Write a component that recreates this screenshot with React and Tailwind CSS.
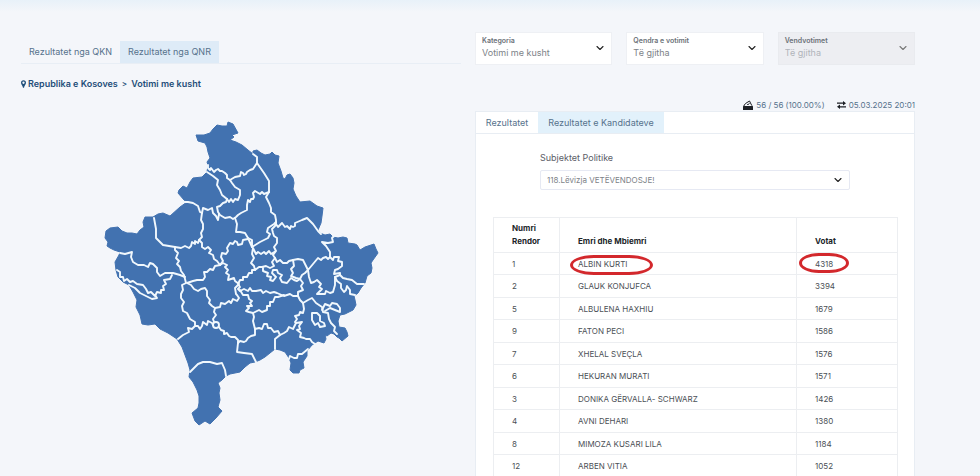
import React, { useState } from "react";

const candidates = [
  { nr: 1, name: "ALBIN KURTI", votes: 4318, marked: true },
  { nr: 2, name: "GLAUK KONJUFCA", votes: 3394 },
  { nr: 5, name: "ALBULENA HAXHIU", votes: 1679 },
  { nr: 9, name: "FATON PECI", votes: 1586 },
  { nr: 7, name: "XHELAL SVEÇLA", votes: 1576 },
  { nr: 6, name: "HEKURAN MURATI", votes: 1571 },
  { nr: 3, name: "DONIKA GËRVALLA- SCHWARZ", votes: 1426 },
  { nr: 4, name: "AVNI DEHARI", votes: 1380 },
  { nr: 8, name: "MIMOZA KUSARI LILA", votes: 1184 },
  { nr: 12, name: "ARBEN VITIA", votes: 1052 },
];

// country border
const outline =
  "M228 122L233 124L238 133L232 135L234 137L230 140L236 142L242 145L248 150L253 154L253 151L257 150L261 153L265 155L270 154L272 152L275 155L279 156L278 163L281 171L283 178L285 179L287 175L290 174L293 178L294 183L293 189L296 196L300 202L310 201L317 206L323 208L322 216L321 223L318 230L320 233L325 235L330 234L333 237L338 238L343 237L347 238L348 243L355 244L357 245L360 250L365 247L374 244L376 249L378 253L373 260L371 263L372 268L371 273L367 276L365 283L361 288L358 293L354 296L355 300L356 305L353 310L349 312L345 314L340 315L338 321L339 327L345 328L347 332L348 336L342 341L339 338L337 337L334 334L331 333L327 336L325 335L326 339L324 343L318 341L312 345L307 351L307 356L303 362L304 368L300 370L299 373L293 373L290 370L291 363L289 358L285 352L280 350L275 349L270 353L265 357L260 360L255 362L250 363L245 367L240 372L230 374L226 376L222 380L218 383L220 388L219 393L220 400L218 407L222 411L216 418L210 424L205 421L199 425L195 421L192 413L198 408L199 403L199 396L197 390L193 382L189 377L190 370L188 363L185 355L182 347L177 339L168 333L160 329L155 324L148 325L142 324L140 315L136 307L137 300L133 292L129 285L123 282L118 277L116 270L115 262L119 255L120 252L114 250L110 248L107 246L108 242L105 238L106 231L110 228L118 227L122 231L127 233L132 233L137 234L140 230L144 227L143 222L145 217L153 217L158 214L163 213L170 216L180 207L187 202L184 200L178 193L179 190L183 186L187 188L190 182L193 178L202 177L207 172L208 165L207 162L210 158L208 152L207 147L205 143L198 141L196 135L204 135L210 133L213 129L217 125L222 126L227 126Z";

// municipality borders
const borders = [
  "M208 165L208 168L210 170L211 168L214 172L216 170L218 169L220 171L222 171L225 173L227 175L227 178L230 180L235 177L240 176L241 172L243 173L244 175L246 174L247 172L250 170L253 169L255 166L257 163L257 157L253 154",
  "M257 163L264 173L269 181L269 192L266 197L269 203L271 208L271 212L275 215L276 220L276 224L278 227L282 223L285 227L287 226L290 229L291 226L293 227L295 226L295 223L302 220L307 218L313 224L318 231L321 234",
  "M207 172L213 176L218 180L217 185L220 190L222 195L227 199L229 202L231 199L233 202L235 199L238 200L240 195L240 190L235 187L232 183L230 180",
  "M227 199L226 202L223 203L220 206L217 207L218 212L220 215L225 218L230 217L233 219L236 217L238 215L241 213L247 210L247 205L248 200L250 202L251 199L253 199L254 197L253 193L255 191L260 194L262 192L264 194L269 192",
  "M182 202L188 202L193 203L198 206L200 212L202 213L203 208L208 210L212 208L213 213L216 216L218 220L219 214",
  "M202 213L201 220L203 224L203 229L201 233L202 237L199 240L198 243L195 241L195 244L192 242L191 246L189 248L185 246L181 248L175 247L169 246L163 245L159 241L156 238L156 229L154 218",
  "M175 247L175 250L178 253L176 258L179 261L177 264L180 267L181 271L184 275L186 283L182 285L183 290L181 294L181 298L184 302L182 306L183 311L187 313L190 319L195 322L195 325",
  "M120 253L125 254L132 252L131 257L133 262L138 265L144 265L148 267L150 263L153 264L157 268L157 272L160 276L165 273L173 273L180 275L185 277",
  "M172 275L170 279L164 280L166 284L163 286L164 290L161 290L161 293L157 292L155 296L151 292L148 293L146 289L143 285L137 284L133 281L130 282L127 279L124 281L123 277L120 277L120 272L117 270",
  "M129 285L135 288L140 293L146 296L152 299L157 298L155 295",
  "M199 240L202 243L202 247L205 249L208 247L211 250L209 253L213 255L214 259L217 261L220 265L215 266L213 270L210 269L207 272L204 272L205 277L203 280L197 280L193 281L187 283L191 285L194 289L198 291L201 289L205 288L207 291L207 296L210 300L209 303L212 306L215 308L214 312L216 315L213 319L214 322",
  "M215 308L220 307L221 303L225 304L229 301L231 303L233 299L237 301L239 298L237 295L236 294L235 288L239 284L235 281L234 278L228 280L229 275L226 273L228 270L225 267L227 265L223 263L220 265",
  "M220 265L223 261L221 257L222 253L226 254L228 251L227 248L230 243L233 244L235 241L237 242L238 245L242 244L243 240L248 239",
  "M235 218L237 224L236 232L240 232L245 233L248 238L252 247L260 242L268 238L270 234L267 232L268 228L274 224L276 222",
  "M276 222L275 226L272 229L273 233L274 236L277 238L277 243L274 247L276 251L271 254L269 251L266 254L264 252L261 254L258 252L256 254L253 248L252 254L254 258L251 263L254 266L255 270L259 267L262 267L266 266L270 268L274 266L272 262L275 258L273 255L276 251",
  "M252 247L252 240L248 238",
  "M275 258L277 262L280 260L283 263L287 263L289 261L293 260L298 259L303 260L308 270L313 264L318 258L321 260L323 258L326 257L328 259L330 257L330 252L326 246L322 242L328 243L333 242L332 238L334 236",
  "M293 260L294 266L291 269L293 273L291 276L296 278L300 279L302 275L305 273L308 270",
  "M255 270L252 270L252 273L249 273L247 277L243 277L243 280L240 280L238 284L240 287L238 289L240 291L244 289L248 291L250 288L252 291L256 291L261 290L263 293L266 291L270 293L274 292L277 293L284 296L290 294L293 296L298 296L298 292L303 290L301 286L303 283L300 279L297 281L294 280L291 278L287 283L282 282L280 278L282 275L278 273L277 270L273 270L272 273L276 277L273 281L270 280L271 277L267 276L268 273L263 271L263 268",
  "M298 296L300 300L303 303L304 309L303 313L300 312L299 315L295 316L297 319L295 322L296 323L293 329L289 327L287 331L284 333L280 335L278 331L274 332L271 328L268 328L267 324L264 324L262 329L259 328L255 329L253 321L254 317L253 313L249 312L246 311L249 308L247 306L252 306L250 303L252 301L249 299L248 295L243 295L240 290",
  "M253 313L259 310L262 312L267 310L267 306L270 306L270 302L273 302L275 297L278 297L284 295",
  "M255 329L255 335L251 336L248 338L246 341L244 342L240 341L238 343",
  "M178 339L183 335L189 332L188 328L192 329L195 326L198 326L200 329L202 326L203 322L207 325L208 321L212 323L213 325M219 327L221 330L224 331L224 334L227 333L229 336L231 337L235 337L238 340L238 343L237 352L244 353L252 354L256 362",
  "M190 372L193 369L198 364L203 362L210 362L217 364L222 363L225 370L226 376",
  "M275 349L275 339L280 335",
  "M296 323L302 322L299 326L300 329L297 330L301 333L300 337L304 338L306 339L310 339L312 342L315 344",
  "M289 359L290 356L294 358L297 358L298 354L302 354L308 349",
  "M303 303L308 300L312 298L316 303L322 307L323 312L328 313L329 319L331 323L335 327L334 331L337 334",
  "M308 270L309 277L311 283L314 282L317 280L321 284L319 287L322 289L317 294L325 294L326 291L330 293L333 292L335 285L335 277L340 275L343 278L347 279L352 280L357 284L364 284",
  "M330 257L333 260L334 257L339 257L338 261L342 262L342 266L338 269L335 270L334 274L340 273L340 275M335 277L337 281L341 284L341 288L344 292L346 290L347 286L350 290L350 294L355 295",
  "M322 310L325 304L330 306L332 303L337 304L340 308L340 312L335 310L330 308L325 311",
  "M312 313L317 313L320 316L320 321L324 323L325 326L320 327L318 323L315 325L312 320Z",
  "M213 325a3 3 0 1 0 6 0a3 3 0 1 0 -6 0",
];

function KosovoMap() {
  return (
    <svg
      viewBox="100 118 284 312"
      className="block w-[284px] h-[312px]"
      role="img"
      aria-label="Republika e Kosoves"
    >
      <path d={outline} fill="#4272b0" stroke="#4272b0" strokeLinejoin="round" />
      <g
        fill="none"
        stroke="#f1f8fd"
        strokeWidth="1.9"
        strokeLinejoin="round"
        strokeLinecap="round"
      >
        {borders.map((d) => (
          <path key={d} d={d} />
        ))}
      </g>
    </svg>
  );
}

function Chevron({ className }) {
  return (
    <svg
      className={`absolute w-2 h-2 pointer-events-none ${className}`}
      viewBox="0 0 8 8"
      fill="none"
      stroke="currentColor"
      strokeWidth="1.1"
      strokeLinecap="round"
      strokeLinejoin="round"
      aria-hidden="true"
    >
      <path d="M1 2.5L4 5.5L7 2.5" />
    </svg>
  );
}

function Filter({ id, label, value, disabled }) {
  return (
    <div
      className={`relative flex-1 h-[33px] border ${
        disabled ? "bg-[#edeef2] border-[#e9ebef]" : "bg-white border-[#eef0f4]"
      }`}
    >
      <label
        htmlFor={id}
        className="absolute left-[6px] top-[3px] text-[7px] leading-[10px] font-semibold text-[#6b7178] pointer-events-none"
      >
        {label}
      </label>
      <select
        id={id}
        disabled={disabled}
        className={`w-full h-full pl-[6px] pt-2 appearance-none text-[9px] leading-[12px] bg-transparent opacity-100 ${
          disabled ? "text-[#b0b4ba]" : "text-[#7d8288]"
        }`}
      >
        <option>{value}</option>
      </select>
      <Chevron
        className={`right-[7px] top-[11px] ${
          disabled ? "text-[#777]" : "text-[#222]"
        }`}
      />
    </div>
  );
}

export default function App() {
  const [source, setSource] = useState("QNR");
  const [tab, setTab] = useState("kandidatet");

  return (
    <div className="h-screen overflow-hidden bg-[#f4f6fa] font-['Inter',sans-serif] text-[9px] leading-[12px] text-[#56728c]">
      <div className="h-3 bg-linear-to-b from-[#e8f1f9] to-[#f4f6fa]" />
      <div className="grid grid-cols-2 gap-[14px] pl-[21px] pr-[65px] pt-5">
        <section className="pt-[9px]">
          <div className="flex border-b border-[#e8eef5]">
            {["QKN", "QNR"].map((name) => (
              <button
                key={name}
                type="button"
                onClick={() => setSource(name)}
                className={`w-[99px] h-[22px] ${
                  source === name ? "bg-[#deebf7]" : ""
                }`}
              >
                Rezultatet nga {name}
              </button>
            ))}
          </div>
          <nav className="flex items-center mt-[14px] font-semibold text-[#1f4e79]">
            <svg viewBox="0 0 6 9" className="w-[5px] h-2 mr-[2px]" aria-hidden="true">
              <path
                fillRule="evenodd"
                fill="currentColor"
                d="M3 0a3 3 0 0 1 3 3C6 5 4 6 3.6 9H2.4C2 6 0 5 0 3a3 3 0 0 1 3-3zM3 1.6a1.4 1.4 0 1 0 0 2.8a1.4 1.4 0 1 0 0-2.8z"
              />
            </svg>
            <a href="#kosova">Republika e Kosoves</a>
            <span className="mx-1 text-[8px] font-medium">&gt;</span>
            <a href="#kusht">Votimi me kusht</a>
          </nav>
          <div className="pl-[79px] mt-7">
            <KosovoMap />
          </div>
        </section>

        <section>
          <div className="flex gap-[14px]">
            <Filter id="kategoria" label="Kategoria" value="Votimi me kusht" />
            <Filter id="qendra" label="Qendra e votimit" value="Të gjitha" />
            <Filter id="vendvotimet" label="Vendvotimet" value="Të gjitha" disabled />
          </div>

          <div className="flex justify-end items-center gap-3 mt-[34px] text-[8px]">
            <span className="flex items-center gap-[3px]">
              <svg viewBox="0 0 10 10" className="w-[10px] h-[10px] text-[#1c1f24]" aria-hidden="true">
                <path fill="none" stroke="currentColor" d="M1 5.5L2.5 3.5L6.5 1L8.5 5" />
                <path fill="none" stroke="currentColor" strokeWidth=".8" d="M4 4L5 5L6.5 3" />
                <path fill="currentColor" d="M1.5 4.5L0 6.5V10H10V6.5L8.5 4.5V6H1.5z" />
              </svg>
              56 / 56 (100.00%)
            </span>
            <span className="flex items-center gap-[3px]">
              <svg viewBox="0 0 9 8" className="w-[9px] h-2 text-[#1c1f24]" aria-hidden="true">
                <path fill="none" stroke="currentColor" strokeWidth="1.3" d="M0 2.2H7M2 5.8H9" />
                <path fill="currentColor" d="M6 0L9 2.2L6 4.4zM3 3.6L0 5.8L3 8z" />
              </svg>
              05.03.2025 20:01
            </span>
          </div>

          <div className="bg-white border border-[#e8edf3]">
            <div className="flex border-b border-[#e8edf3]">
              <button
                type="button"
                onClick={() => setTab("rezultatet")}
                className={`h-[21px] w-[62px] ${
                  tab === "rezultatet" ? "bg-[#e2f1fb]" : ""
                }`}
              >
                Rezultatet
              </button>
              <button
                type="button"
                onClick={() => setTab("kandidatet")}
                className={`h-[21px] w-[126px] ${
                  tab === "kandidatet" ? "bg-[#e2f1fb]" : ""
                }`}
              >
                Rezultatet e Kandidateve
              </button>
            </div>

            <div className="mx-16 pt-[18px]">
              <label htmlFor="subjekti" className="block text-[#5b6067]">
                Subjektet Politike
              </label>
              <div className="relative mt-[6px]">
                <select
                  id="subjekti"
                  className="block w-full h-[20px] pl-[6px] appearance-none border border-[#e6e9f3] rounded-xs bg-white text-[8px] text-[#7d8288]"
                >
                  <option>118.Lëvizja VETËVENDOSJE!</option>
                </select>
                <Chevron className="right-2 top-[6px] text-[#222]" />
              </div>
            </div>

            <div className="ml-[17px] mr-4 mt-[27px]">
              <table className="w-full table-fixed border-collapse text-left text-[8px] text-[#4b5056]">
                <colgroup>
                  <col className="w-[66px]" />
                  <col />
                  <col className="w-[101px]" />
                </colgroup>
                <thead>
                  <tr className="h-[35px] align-bottom text-[#212529] leading-[13px]">
                    <th className="border border-[#eceef1] pl-[18px] pb-1">
                      Numri Rendor
                    </th>
                    <th className="border border-[#eceef1] pl-[18px] pb-1">
                      Emri dhe Mbiemri
                    </th>
                    <th className="border border-[#eceef1] pl-[18px] pb-1">
                      Votat
                    </th>
                  </tr>
                </thead>
                <tbody>
                  {candidates.map((c) => (
                    <tr key={c.nr} className="h-[22px] even:h-[23px]">
                      <td className="border border-[#eceef1] pl-[18px]">{c.nr}</td>
                      <td className="border border-[#eceef1] pl-[18px]">
                        <span className="relative">
                          {c.name}
                          {c.marked && (
                            <span className="absolute -left-2 -top-1 w-[83px] h-5 border-[3px] border-[#d3282c] rounded-[24px/10px]" />
                          )}
                        </span>
                      </td>
                      <td className="border border-[#eceef1] pl-[18px]">
                        <span className="relative">
                          {c.votes}
                          {c.marked && (
                            <span className="absolute -left-4 -top-[6px] w-[50px] h-5 border-[3px] border-[#d3282c] rounded-[20px/10px]" />
                          )}
                        </span>
                      </td>
                    </tr>
                  ))}
                </tbody>
              </table>
            </div>
          </div>
        </section>
      </div>
    </div>
  );
}
